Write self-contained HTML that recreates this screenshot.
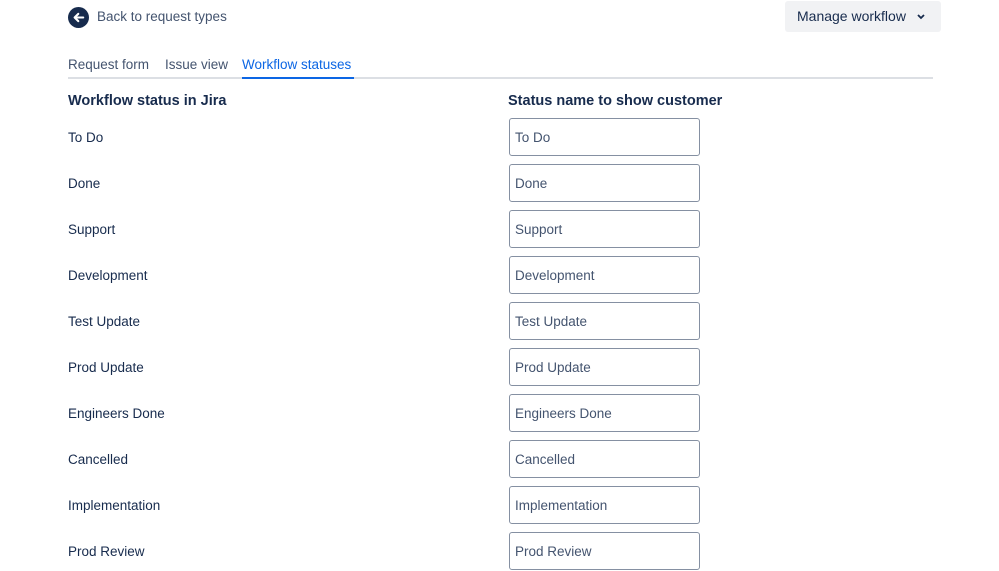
<!DOCTYPE html><html><head><style>
body{margin:0;width:999px;height:570px;background:#fff;font-family:"Liberation Sans",sans-serif;color:#172b4d;position:relative;overflow:hidden}
.a{position:absolute;white-space:nowrap}
.lbl{font-size:13.5px;color:#172b4d}
.in{position:absolute;left:509px;width:184px;height:36px;border:1px solid #8590a2;border-radius:3px;font-size:13.5px;color:#44546f;line-height:38px;padding-left:5px;box-sizing:content-box}
</style></head><body>
<svg class="a" style="left:68px;top:7px" width="21" height="21" viewBox="0 0 20 20"><circle cx="10" cy="10" r="10" fill="#172b4d"/><path d="M14.5 10H6.5M9.8 6.5L6.3 10l3.5 3.5" stroke="#fff" stroke-width="2" fill="none" stroke-linecap="round" stroke-linejoin="round"/></svg>
<div class="a" style="left:97px;top:9px;font-size:13.5px;color:#44546f">Back to request types</div>
<div class="a" style="left:785px;top:1px;width:156px;height:31px;background:#f1f2f4;border-radius:3px"></div>
<div class="a" style="left:797px;top:8px;font-size:14px;color:#172b4d">Manage workflow</div>
<svg class="a" style="left:916px;top:13px" width="10" height="8" viewBox="0 0 10 8"><path d="M2 2l3 3 3-3" stroke="#172b4d" stroke-width="1.8" fill="none"/></svg>
<div class="a" style="left:68px;top:57px;font-size:13.5px;color:#44546f">Request form</div>
<div class="a" style="left:165px;top:57px;font-size:13.5px;color:#44546f">Issue view</div>
<div class="a" style="left:242px;top:57px;font-size:13.5px;color:#0c66e4">Workflow statuses</div>
<div class="a" style="left:68px;top:77px;width:865px;height:2px;background:#dcdfe4"></div>
<div class="a" style="left:242px;top:77px;width:112px;height:2px;background:#0c66e4"></div>
<div class="a" style="left:68px;top:93px;font-size:14.5px;font-weight:bold;color:#172b4d">Workflow status in Jira</div>
<div class="a" style="left:508px;top:93px;font-size:14.5px;font-weight:bold;color:#172b4d">Status name to show customer</div>
<div class="a lbl" style="left:68px;top:130px">To Do</div><div class="in" style="top:118px">To Do</div>
<div class="a lbl" style="left:68px;top:176px">Done</div><div class="in" style="top:164px">Done</div>
<div class="a lbl" style="left:68px;top:222px">Support</div><div class="in" style="top:210px">Support</div>
<div class="a lbl" style="left:68px;top:268px">Development</div><div class="in" style="top:256px">Development</div>
<div class="a lbl" style="left:68px;top:314px">Test Update</div><div class="in" style="top:302px">Test Update</div>
<div class="a lbl" style="left:68px;top:360px">Prod Update</div><div class="in" style="top:348px">Prod Update</div>
<div class="a lbl" style="left:68px;top:406px">Engineers Done</div><div class="in" style="top:394px">Engineers Done</div>
<div class="a lbl" style="left:68px;top:452px">Cancelled</div><div class="in" style="top:440px">Cancelled</div>
<div class="a lbl" style="left:68px;top:498px">Implementation</div><div class="in" style="top:486px">Implementation</div>
<div class="a lbl" style="left:68px;top:544px">Prod Review</div><div class="in" style="top:532px">Prod Review</div>
</body></html>
